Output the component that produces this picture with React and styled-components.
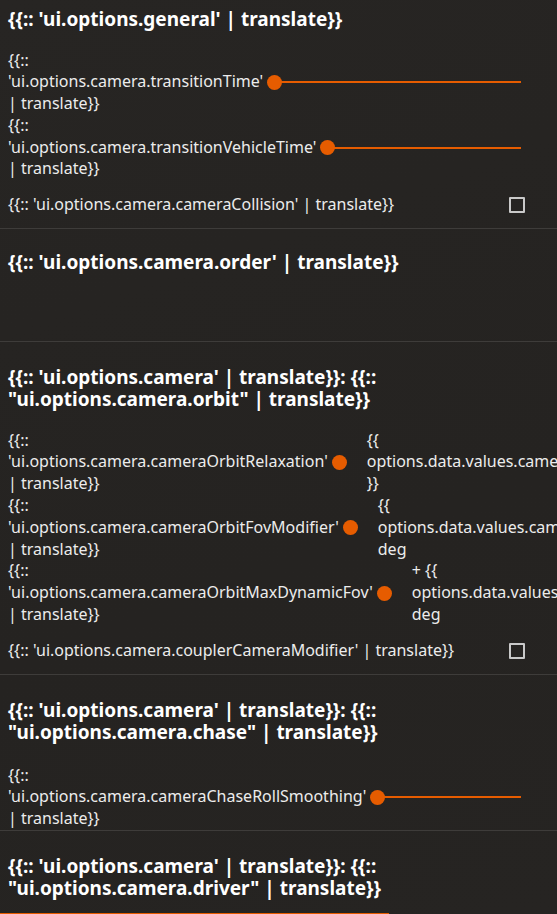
import React from 'react'
import styled, { createGlobalStyle } from 'styled-components'

// styles starts here ....

const GlobalStyle = createGlobalStyle`
  html, body {
    margin: 0;
    padding: 0;
    overflow: hidden;
    background: #262422;
  }
  body {
    font-family: "Noto Sans", "Open Sans", sans-serif;
    color: #ececec;
  }
`

const Page = styled.div`
  width: 557px;
  height: 914px;
  overflow: hidden;
  background: linear-gradient(160deg, #272523 0%, #252321 60%, #262422 100%);
`

const Section = styled.section`
  padding: ${p => p.$top || 24}px 0 0 8px;
  border-top: ${p => (p.$top === 8 ? 'none' : '1px solid #3e3c3a')};
`

const Heading = styled.h2`
  margin: 0 0 ${p => p.$gap || 19}px;
  padding-right: 8px;
  font-size: 19px;
  font-weight: 700;
  line-height: 22.5px;
  color: #ffffff;
`

const OrderList = styled.div`
  height: 48px;
`

const Row = styled.div`
  display: flex;
  align-items: center;
  padding-right: 36px;
  font-size: 16px;
  line-height: 21.8px;
`

const CheckRow = styled(Row)`
  justify-content: space-between;
  padding: 14px 32px 12px 0;
`

const Label = styled.div`
  width: min-content;
  flex-shrink: 0;
`

const Slider = styled.div`
  flex: 1;
  min-width: 15px;
  display: flex;
  align-items: center;
  margin: 0 ${p => (p.$compact ? '4px' : '0')} 0 4px;
`

const Thumb = styled.span`
  width: 15px;
  height: 15px;
  border-radius: 50%;
  background: #e65c00;
  flex-shrink: 0;
`

const Track = styled.span`
  flex: 1;
  height: 2px;
  margin-left: -1px;
  background: #e65c00;
`

const Value = styled.div`
  width: min-content;
  flex-shrink: 0;
  margin-left: 16px;
`

const Check = styled.span`
  width: 16px;
  height: 16px;
  box-sizing: border-box;
  border: 2px solid #c9c9c9;
  border-radius: 1px;
  flex-shrink: 0;
`

const BottomBar = styled.div`
  width: 389px;
  height: 4px;
  margin-left: -8px;
  background: #e65c00;
`

// styles end here......

const t = key => `{{:: '${key}' | translate}}`

const SliderRow = ({ name, value }) => (
  <Row>
    <Label>{t(`ui.options.camera.${name}`)}</Label>
    <Slider $compact={!!value}>
      <Thumb />
      {!value && <Track />}
    </Slider>
    {value && <Value>{value}</Value>}
  </Row>
)

const CheckboxRow = ({ name }) => (
  <CheckRow>
    <span>{t(`ui.options.camera.${name}`)}</span>
    <Check />
  </CheckRow>
)

const App = () => {
  return (
    <Page>
      <GlobalStyle />

      <Section $top={8}>
        <Heading>{t('ui.options.general')}</Heading>
        <SliderRow name="transitionTime" />
        <SliderRow name="transitionVehicleTime" />
        <CheckboxRow name="cameraCollision" />
      </Section>

      <Section $top={22}>
        <Heading>{t('ui.options.camera.order')}</Heading>
        <OrderList />
      </Section>

      <Section>
        <Heading>{`{{:: 'ui.options.camera' | translate}}: {{:: "ui.options.camera.orbit" | translate}}`}</Heading>
        <SliderRow name="cameraOrbitRelaxation" value="{{ options.data.values.cameraOrbitRelaxation }}" />
        <SliderRow name="cameraOrbitFovModifier" value="{{ options.data.values.cameraOrbitFovModifier}} deg" />
        <SliderRow name="cameraOrbitMaxDynamicFov" value="+ {{ options.data.values.cameraOrbitMaxDynamicFov}} deg" />
        <CheckboxRow name="couplerCameraModifier" />
      </Section>

      <Section>
        <Heading $gap={21}>{`{{:: 'ui.options.camera' | translate}}: {{:: "ui.options.camera.chase" | translate}}`}</Heading>
        <SliderRow name="cameraChaseRollSmoothing" />
      </Section>

      <Section>
        <Heading $gap={13}>{`{{:: 'ui.options.camera' | translate}}: {{:: "ui.options.camera.driver" | translate}}`}</Heading>
        <BottomBar />
      </Section>
    </Page>
  )
}

export default App
